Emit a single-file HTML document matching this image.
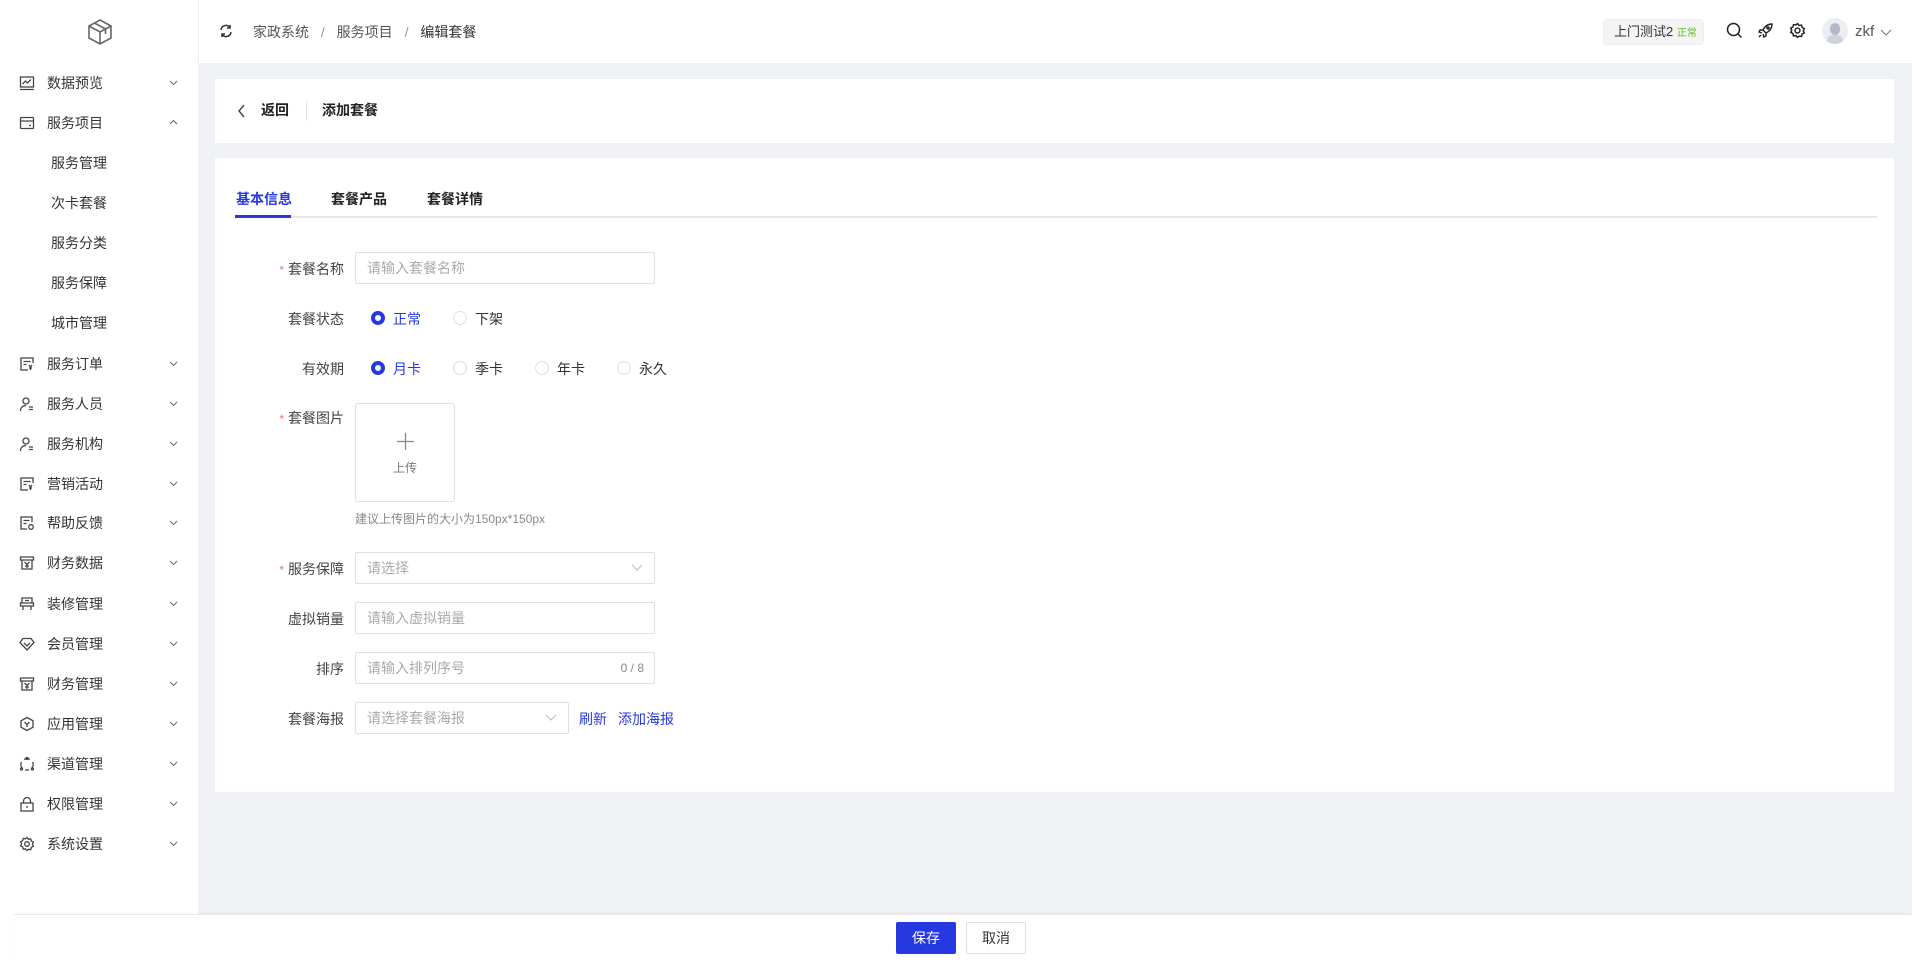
<!DOCTYPE html>
<html><head><meta charset="utf-8">
<style>
*{box-sizing:border-box;margin:0;padding:0}
body{width:1912px;height:962px;overflow:hidden;background:#f0f1f4;font-family:"Liberation Sans","Noto Sans CJK SC",sans-serif;font-size:14px;color:#333;position:relative}
.abs{position:absolute}
#side{left:0;top:0;width:199px;height:962px;background:#fff;border-right:1px solid #eef0f3}
.mi{position:absolute;left:0;width:199px;height:20px;line-height:20px;font-size:14px;color:#333}
.mi svg.ic{position:absolute;left:19px;top:2px}
.mi span{position:absolute;left:47px}
.mi.sub span{left:51px}
.mi .ch{position:absolute;left:168px;top:4px}
#head{left:199px;top:0;width:1713px;height:63px;background:#fff}
.card{background:#fff;position:absolute}
.lbl{position:absolute;width:145px;left:199px;text-align:right;font-size:14px;color:#444}
.lbl i{color:#f56c6c;font-style:normal;margin-right:4px;font-size:12px}
.inp{position:absolute;left:355px;width:300px;height:32px;border:1px solid #dcdfe6;border-radius:2px;background:#fff;color:#aaa;font-size:14px;line-height:30px;padding-left:11px}
.rad{position:absolute;width:14px;height:14px;border-radius:50%;border:1px solid #dcdfe6;background:#fff}
.rad.on{border:4px solid #2638e0;background:#fff}
.rt{position:absolute;font-size:14px;color:#333}
.rt.on{color:#2638e0}
</style></head><body>

<div id="side" class="abs">
<svg class="abs" style="left:86px;top:18px" width="28" height="28" viewBox="0 0 28 28" fill="none" stroke="#666" stroke-width="1.6"><path d="M14 2 L25 8 V20 L14 26 L3 20 V8 Z M3 8 L14 14 L25 8 M14 14 V26 M8.5 5 L19.5 11 V16"/></svg>

<div class="mi" style="top:73px"><svg class="ic" width="16" height="16" viewBox="0 0 16 16" fill="none" stroke="#444" stroke-width="1.3"><rect x="1.5" y="2" width="13" height="10"/><path d="M1 14.5h14M3.5 9l3-3 2 2 3.5-3.5"/></svg><span>数据预览</span><svg class="ch" width="11" height="11" viewBox="0 0 11 11" fill="none" stroke="#666"><path d="M2 4l3.5 3.5L9 4"/></svg></div>
<div class="mi" style="top:113px"><svg class="ic" width="16" height="16" viewBox="0 0 16 16" fill="none" stroke="#444" stroke-width="1.3"><rect x="1.5" y="2.5" width="13" height="11" rx="1"/><path d="M1.5 6h13M10 10.5h2"/></svg><span>服务项目</span><svg class="ch" width="11" height="11" viewBox="0 0 11 11" fill="none" stroke="#666"><path d="M2 7l3.5-3.5L9 7"/></svg></div>
<div class="mi sub" style="top:153px"><span>服务管理</span></div>
<div class="mi sub" style="top:193px"><span>次卡套餐</span></div>
<div class="mi sub" style="top:233px"><span>服务分类</span></div>
<div class="mi sub" style="top:273px"><span>服务保障</span></div>
<div class="mi sub" style="top:313px"><span>城市管理</span></div>

<div class="mi" style="top:354px"><svg class="ic" width="16" height="16" viewBox="0 0 16 16" fill="none" stroke="#444" stroke-width="1.3"><path d="M14 7V2H2v12h7M4.5 5.5h7M4.5 8.5h3M10 9l1.5 2 1.5-2M11.5 11v3M10 12h3"/></svg><span>服务订单</span><svg class="ch" width="11" height="11" viewBox="0 0 11 11" fill="none" stroke="#666"><path d="M2 4l3.5 3.5L9 4"/></svg></div>
<div class="mi" style="top:394px"><svg class="ic" width="16" height="16" viewBox="0 0 16 16" fill="none" stroke="#444" stroke-width="1.3"><circle cx="7" cy="5" r="3"/><path d="M1.5 15c0-3.5 2.5-5.5 5.5-5.5M10 11h4M10 13.5h4"/></svg><span>服务人员</span><svg class="ch" width="11" height="11" viewBox="0 0 11 11" fill="none" stroke="#666"><path d="M2 4l3.5 3.5L9 4"/></svg></div>
<div class="mi" style="top:434px"><svg class="ic" width="16" height="16" viewBox="0 0 16 16" fill="none" stroke="#444" stroke-width="1.3"><circle cx="7" cy="5" r="3"/><path d="M1.5 15c0-3.5 2.5-5.5 5.5-5.5M10 11h4M10 13.5h4"/></svg><span>服务机构</span><svg class="ch" width="11" height="11" viewBox="0 0 11 11" fill="none" stroke="#666"><path d="M2 4l3.5 3.5L9 4"/></svg></div>
<div class="mi" style="top:474px"><svg class="ic" width="16" height="16" viewBox="0 0 16 16" fill="none" stroke="#444" stroke-width="1.3"><path d="M14 7V2H2v12h7M4.5 5.5h7M4.5 8.5h3M10 9l1.5 2 1.5-2M11.5 11v3M10 12h3"/></svg><span>营销活动</span><svg class="ch" width="11" height="11" viewBox="0 0 11 11" fill="none" stroke="#666"><path d="M2 4l3.5 3.5L9 4"/></svg></div>
<div class="mi" style="top:513px"><svg class="ic" width="16" height="16" viewBox="0 0 16 16" fill="none" stroke="#444" stroke-width="1.3"><path d="M13 7V2H2v12h6M4.5 5.5h6M4.5 8.5h3"/><circle cx="12" cy="12" r="2.3"/></svg><span>帮助反馈</span><svg class="ch" width="11" height="11" viewBox="0 0 11 11" fill="none" stroke="#666"><path d="M2 4l3.5 3.5L9 4"/></svg></div>
<div class="mi" style="top:553px"><svg class="ic" width="16" height="16" viewBox="0 0 16 16" fill="none" stroke="#444" stroke-width="1.3"><path d="M1.5 2h13v3h-13zM3 5v9h10V5M5.5 7l2.5 2.5L10.5 7M8 9.5V13M6 11h4"/></svg><span>财务数据</span><svg class="ch" width="11" height="11" viewBox="0 0 11 11" fill="none" stroke="#666"><path d="M2 4l3.5 3.5L9 4"/></svg></div>
<div class="mi" style="top:594px"><svg class="ic" width="16" height="16" viewBox="0 0 16 16" fill="none" stroke="#444" stroke-width="1.3"><path d="M3 2h10v5H3zM1.5 7h13v3H1.5zM4 10v4M12 10v4M6 4.5h4"/></svg><span>装修管理</span><svg class="ch" width="11" height="11" viewBox="0 0 11 11" fill="none" stroke="#666"><path d="M2 4l3.5 3.5L9 4"/></svg></div>
<div class="mi" style="top:634px"><svg class="ic" width="16" height="16" viewBox="0 0 16 16" fill="none" stroke="#444" stroke-width="1.3"><path d="M4 2.5h8l3 4-7 7.5-7-7.5zM5 7l3 3 3-3"/></svg><span>会员管理</span><svg class="ch" width="11" height="11" viewBox="0 0 11 11" fill="none" stroke="#666"><path d="M2 4l3.5 3.5L9 4"/></svg></div>
<div class="mi" style="top:674px"><svg class="ic" width="16" height="16" viewBox="0 0 16 16" fill="none" stroke="#444" stroke-width="1.3"><path d="M1.5 2h13v3h-13zM3 5v9h10V5M5.5 7l2.5 2.5L10.5 7M8 9.5V13M6 11h4"/></svg><span>财务管理</span><svg class="ch" width="11" height="11" viewBox="0 0 11 11" fill="none" stroke="#666"><path d="M2 4l3.5 3.5L9 4"/></svg></div>
<div class="mi" style="top:714px"><svg class="ic" width="16" height="16" viewBox="0 0 16 16" fill="none" stroke="#444" stroke-width="1.3"><path d="M8 1.5l6 3.3v6.4L8 14.5l-6-3.3V4.8z"/><path d="M5.5 6l2.5 2.5L10.5 6M8 8.5V11"/></svg><span>应用管理</span><svg class="ch" width="11" height="11" viewBox="0 0 11 11" fill="none" stroke="#666"><path d="M2 4l3.5 3.5L9 4"/></svg></div>
<div class="mi" style="top:754px"><svg class="ic" width="16" height="16" viewBox="0 0 16 16" fill="none" stroke="#444" stroke-width="1.3"><path d="M5 3.5a5.5 5.5 0 0 1 6 0M13.5 6a5.5 5.5 0 0 1-1 6.5M3.5 12.5a5.5 5.5 0 0 1-1-6.5M6 14h4"/><circle cx="8" cy="2.5" r="1"/><circle cx="2.5" cy="13" r="1"/><circle cx="13.5" cy="13" r="1"/></svg><span>渠道管理</span><svg class="ch" width="11" height="11" viewBox="0 0 11 11" fill="none" stroke="#666"><path d="M2 4l3.5 3.5L9 4"/></svg></div>
<div class="mi" style="top:794px"><svg class="ic" width="16" height="16" viewBox="0 0 16 16" fill="none" stroke="#444" stroke-width="1.3"><rect x="2" y="7" width="12" height="8"/><path d="M4.5 7V5a3.5 3.5 0 0 1 7 0v2M8 10v2"/></svg><span>权限管理</span><svg class="ch" width="11" height="11" viewBox="0 0 11 11" fill="none" stroke="#666"><path d="M2 4l3.5 3.5L9 4"/></svg></div>
<div class="mi" style="top:834px"><svg class="ic" width="16" height="16" viewBox="0 0 16 16" fill="none" stroke="#444" stroke-width="1.3"><path d="M8 1.5l1.5 1.8 2.3-.3.5 2.2 2.1 1-1 2.1 1 2-2.1 1-.5 2.3-2.3-.3L8 14.5l-1.5-1.7-2.3.3-.5-2.3-2.1-1 1-2-1-2.1 2.1-1 .5-2.2 2.3.3z"/><circle cx="8" cy="8" r="2.3"/></svg><span>系统设置</span><svg class="ch" width="11" height="11" viewBox="0 0 11 11" fill="none" stroke="#666"><path d="M2 4l3.5 3.5L9 4"/></svg></div>
</div>

<div id="head" class="abs">
<svg class="abs" style="left:20px;top:24px" width="14" height="14" viewBox="0 0 14 14" fill="none" stroke="#333" stroke-width="1.5"><path d="M2 6a5 5 0 0 1 9-2.5M12 8a5 5 0 0 1-9 2.5M11 1v3h-3M3 13v-3h3"/></svg>
<div class="abs" style="left:54px;top:22px;font-size:14px;color:#555;white-space:nowrap">家政系统 <span style="color:#999;margin:0 8px">/</span> 服务项目 <span style="color:#999;margin:0 8px">/</span> <span style="color:#333">编辑套餐</span></div>
<div class="abs" style="left:1404px;top:19px;width:101px;height:26px;background:#f4f4f5;border:1px solid #eee;border-radius:4px;font-size:13px;line-height:24px;padding-left:10px;color:#333">上门测试2 <span style="font-size:10px;color:#52c41a">正常</span></div>
<svg class="abs" style="left:1527px;top:22px" width="17" height="17" viewBox="0 0 17 17" fill="none" stroke="#222" stroke-width="1.5"><circle cx="7.5" cy="7.5" r="6"/><path d="M12 12l3.5 3.5"/></svg>
<svg class="abs" style="left:1558px;top:22px" width="17" height="17" viewBox="0 0 17 17" fill="none" stroke="#222" stroke-width="1.4"><path d="M15 2c-4 0-7 2-9 6l3 3c4-2 6-5 6-9zM6 8L3 8 2 10l3 1M9 11v3l-2 1-1-3M4 13l-2 2"/><circle cx="11" cy="6" r="1"/></svg>
<svg class="abs" style="left:1590px;top:22px" width="17" height="17" viewBox="0 0 16 16" fill="none" stroke="#222" stroke-width="1.4"><path d="M8 1.5l1.5 1.8 2.3-.3.5 2.2 2.1 1-1 2.1 1 2-2.1 1-.5 2.3-2.3-.3L8 14.5l-1.5-1.7-2.3.3-.5-2.3-2.1-1 1-2-1-2.1 2.1-1 .5-2.2 2.3.3z"/><circle cx="8" cy="8" r="2.3"/></svg>
<div class="abs" style="left:1623px;top:18px;width:26px;height:26px;border-radius:50%;background:#eceef3;overflow:hidden"><div style="position:absolute;left:8px;top:5px;width:10px;height:12px;border-radius:5px;background:#b5b9c6"></div><div style="position:absolute;left:5px;top:17px;width:16px;height:12px;border-radius:8px;background:#cfd2db"></div></div>
<div class="abs" style="left:1656px;top:23px;font-size:15px;color:#555">zkf</div>
<svg class="abs" style="left:1681px;top:27px" width="12" height="10" viewBox="0 0 12 10" fill="none" stroke="#777"><path d="M1 3l5 5 5-5"/></svg>
</div>

<div class="card" style="left:215px;top:79px;width:1679px;height:64px">
<svg class="abs" style="left:22px;top:25px" width="10" height="14" viewBox="0 0 10 14" fill="none" stroke="#444" stroke-width="1.4"><path d="M7 1L2 7l5 6"/></svg>
<div class="abs" style="left:46px;top:21px;font-size:14px;font-weight:bold;color:#222">返回</div>
<div class="abs" style="left:91px;top:22px;width:1px;height:20px;background:#e4e4e4"></div>
<div class="abs" style="left:107px;top:21px;font-size:14px;font-weight:bold;color:#222">添加套餐</div>
</div>

<div class="card" style="left:215px;top:158px;width:1679px;height:634px"></div>
<div class="abs" style="left:235px;top:216px;width:1642px;height:2px;background:#e4e7ed"></div>
<div class="abs" style="left:235px;top:215px;width:56px;height:3px;background:#2638e0"></div>
<div class="abs" style="left:236px;top:189px;font-size:14px;font-weight:bold;color:#2638e0">基本信息</div>
<div class="abs" style="left:331px;top:189px;font-size:14px;font-weight:bold;color:#222">套餐产品</div>
<div class="abs" style="left:427px;top:189px;font-size:14px;font-weight:bold;color:#222">套餐详情</div>

<div class="lbl" style="top:259px"><i>*</i>套餐名称</div>
<div class="inp" style="top:252px">请输入套餐名称</div>

<div class="lbl" style="top:309px">套餐状态</div>
<div class="rad on" style="left:371px;top:311px"></div><div class="rt on" style="left:393px;top:309px">正常</div>
<div class="rad" style="left:453px;top:311px"></div><div class="rt" style="left:475px;top:309px">下架</div>

<div class="lbl" style="top:359px">有效期</div>
<div class="rad on" style="left:371px;top:361px"></div><div class="rt on" style="left:393px;top:359px">月卡</div>
<div class="rad" style="left:453px;top:361px"></div><div class="rt" style="left:475px;top:359px">季卡</div>
<div class="rad" style="left:535px;top:361px"></div><div class="rt" style="left:557px;top:359px">年卡</div>
<div class="rad" style="left:617px;top:361px"></div><div class="rt" style="left:639px;top:359px">永久</div>

<div class="lbl" style="top:408px"><i>*</i>套餐图片</div>
<div class="abs" style="left:355px;top:403px;width:100px;height:99px;border:1px solid #dcdfe6;border-radius:3px;background:#fff">
<svg class="abs" style="left:41px;top:29px" width="17" height="17" viewBox="0 0 17 17" stroke="#888" stroke-width="1.3"><path d="M8.5 0v17M0 8.5h17"/></svg>
<div class="abs" style="left:37px;top:55px;font-size:12px;color:#777">上传</div></div>
<div class="abs" style="left:355px;top:510px;font-size:12px;color:#888">建议上传图片的大小为150px*150px</div>

<div class="lbl" style="top:559px"><i>*</i>服务保障</div>
<div class="inp" style="top:552px">请选择<svg class="abs" style="left:275px;top:11px" width="12" height="8" viewBox="0 0 12 8" fill="none" stroke="#bbb"><path d="M1 1l5 5 5-5"/></svg></div>

<div class="lbl" style="top:609px">虚拟销量</div>
<div class="inp" style="top:602px">请输入虚拟销量</div>

<div class="lbl" style="top:659px">排序</div>
<div class="inp" style="top:652px">请输入排列序号<span class="abs" style="right:10px;top:0;font-size:12px;color:#888">0 / 8</span></div>

<div class="lbl" style="top:709px">套餐海报</div>
<div class="inp" style="top:702px;width:214px">请选择套餐海报<svg class="abs" style="left:189px;top:11px" width="12" height="8" viewBox="0 0 12 8" fill="none" stroke="#bbb"><path d="M1 1l5 5 5-5"/></svg></div>
<div class="abs" style="left:579px;top:709px;font-size:14px;color:#2638e0">刷新</div>
<div class="abs" style="left:618px;top:709px;font-size:14px;color:#2638e0">添加海报</div>

<div class="abs" style="left:14px;top:914px;width:1898px;height:48px;background:#fff;border-top:1px solid #e8e8e8;box-shadow:0 -1px 3px rgba(0,0,0,0.03)"></div>
<div class="abs" style="left:896px;top:922px;width:60px;height:32px;background:#2638e0;border-radius:2px;color:#fff;font-size:14px;line-height:32px;text-align:center">保存</div>
<div class="abs" style="left:966px;top:922px;width:60px;height:32px;background:#fff;border:1px solid #dcdfe6;border-radius:2px;color:#333;font-size:14px;line-height:30px;text-align:center">取消</div>
</body></html>
